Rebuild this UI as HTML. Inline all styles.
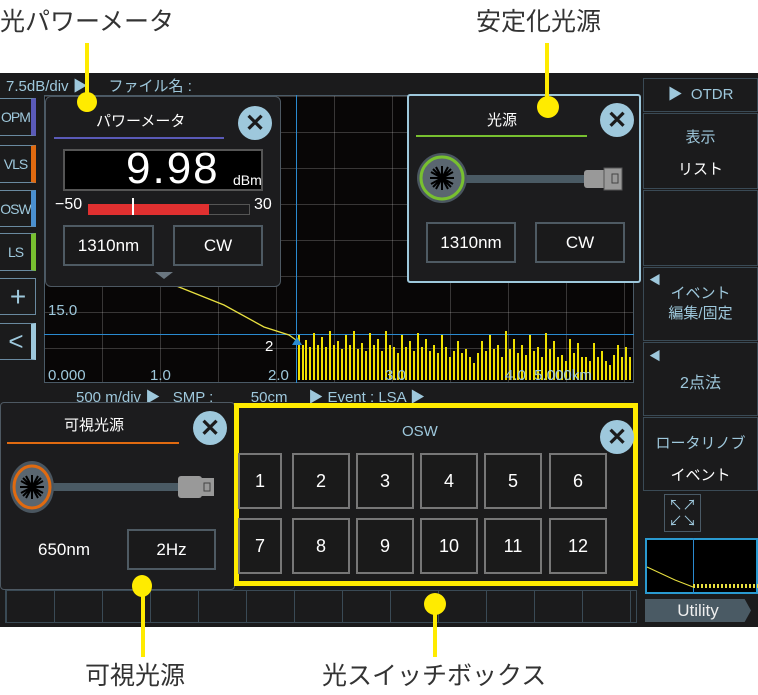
<!DOCTYPE html>
<html><head><meta charset="utf-8"><style>
*{margin:0;padding:0;box-sizing:border-box}
body{width:758px;height:695px;background:#fff;position:relative;overflow:hidden;font-family:"Liberation Sans","Noto Sans CJK JP",sans-serif}
.a{position:absolute}
.lbl{font-size:25px;color:#333;white-space:nowrap}
.scr{left:0;top:73px;width:758px;height:554px;background:#1b1b1c}
.lb{color:#9ec8dc;font-size:15px;white-space:nowrap}
.panel{background:#1c1c1e;border:1px solid #4d5862;border-radius:6px}
.box{border:2px solid #4e5a63;color:#fff;font-size:17px;display:flex;align-items:center;justify-content:center;background:#1a1a1b}
.x{width:34px;height:34px;border-radius:50%;background:#9ec8dc;color:#1b1b1c;font-size:24px;font-weight:bold;display:flex;align-items:center;justify-content:center}
.lbtn{left:0;width:36px;border:1px solid #6a8aa0;border-left:none;color:#9ec8dc;font-size:14px;letter-spacing:-1px;display:flex;align-items:center;justify-content:center;overflow:hidden}
.rb{left:643px;width:115px;border:1px solid #3a4a55;background:#1b1b1c;color:#9ec8dc;font-size:15px;text-align:center}
.g{width:58px;height:56px;border:2px solid #777;color:#fff;font-size:18px;display:flex;align-items:center;justify-content:center;background:#1a1a1a}
.yl{background:#ffeb00}
</style></head><body>
<div class="a lbl" style="left:0;top:2px">光パワーメータ</div>
<div class="a lbl" style="left:476px;top:2px">安定化光源</div>
<div class="a lbl" style="left:85px;top:656px">可視光源</div>
<div class="a lbl" style="left:322px;top:656px">光スイッチボックス</div>

<div class="a scr"></div>
<div class="a lb" style="left:6px;top:75px">7.5dB/div ▶ &nbsp; &nbsp; ファイル名 :</div>
<!-- plot -->
<div class="a" style="left:44px;top:95px;width:590px;height:288px;background:#080606;border:1px solid #4a5a66;
background-image:linear-gradient(90deg,transparent 0,transparent 98%,rgba(200,200,200,.25) 98%),linear-gradient(0deg,transparent 0,transparent 97%,rgba(200,200,200,.25) 97%);background-size:58px 100%,100% 36px"></div>
<div class="a" style="left:296px;top:95px;width:1px;height:288px;background:#2a8ad0"></div>
<div class="a" style="left:44px;top:334px;width:590px;height:1px;background:#2a8ad0"></div>
<svg class="a" style="left:44px;top:95px" width="590" height="288"><polyline points="130,190 180,210 220,232 245,240 252,245" stroke="#e8e040" fill="none" stroke-width="1.3"/>
<g stroke="#f0e000" stroke-width="2">
<path d="M255 240V285M259 250V285M262 245V285M266 252V285M270 238V285M274 250V285M278 242V285M282 252V285M286 236V285M290 250V285M294 246V285M298 254V285M302 240V285M306 250V285M310 236V285M314 254V285M318 248V285M322 256V285M326 238V285M330 250V285M334 244V285M338 256V285M342 236V285M346 250V285M350 252V285M354 258V285M358 240V285M362 252V285M366 246V285M370 256V285M374 238V285M378 252V285M382 244V285M386 256V285M390 250V285M394 258V285M398 240V285M402 252V285M406 262V285M410 256V285M414 246V285M418 258V285M422 254V285M426 262V285M430 268V285M434 258V285M438 246V285M442 256V285M446 240V285M450 254V285M454 250V285M458 262V285M462 236V285M466 254V285M470 244V285M474 258V285M478 250V285M482 260V285M486 240V285M490 256V285M494 252V285M498 262V285M502 238V285M506 254V285M510 246V285M514 262V285M518 260V285M522 266V285M526 244V285M530 258V285M534 248V285M538 262V285M542 262V285M546 266V285M550 248V285M554 262V285M558 256V285M562 266V285M566 270V285M570 260V285M574 250V285M578 262V285M582 252V285M586 262V285"/></g></svg>
<div class="a lb" style="left:48px;top:302px">15.0</div>
<div class="a lb" style="left:48px;top:367px">0.000</div>
<div class="a lb" style="left:150px;top:367px">1.0</div>
<div class="a lb" style="left:268px;top:367px">2.0</div>
<div class="a lb" style="left:385px;top:367px">3.0</div>
<div class="a lb" style="left:505px;top:367px">4.0 &nbsp;5.000km</div>
<div class="a" style="left:265px;top:338px;color:#fff;font-size:15px">2</div>
<div class="a" style="left:292px;top:337px;width:0;height:0;border-left:5px solid transparent;border-right:5px solid transparent;border-bottom:8px solid #2a8ad0"></div>
<div class="a lb" style="left:76px;top:386px">500 m/div ▶ &nbsp; SMP : &nbsp; &nbsp; &nbsp; &nbsp; 50cm &nbsp; &nbsp; ▶ Event : LSA ▶</div>

<!-- left buttons -->
<div class="a lbtn" style="top:98px;height:38px;border-right:5px solid #5a5ab8">OPM</div>
<div class="a lbtn" style="top:145px;height:38px;border-right:5px solid #e06a10">VLS</div>
<div class="a lbtn" style="top:190px;height:37px;border-right:5px solid #4a90d0">OSW</div>
<div class="a lbtn" style="top:233px;height:38px;border-right:5px solid #78c030">LS</div>
<div class="a lbtn" style="top:278px;height:37px;border-right:1px solid #6a8aa0;font-size:28px">+</div>
<div class="a lbtn" style="top:323px;height:37px;border-right:5px solid #9ec8dc;font-size:26px">&lt;</div>

<!-- power meter -->
<div class="a panel" style="left:45px;top:96px;width:236px;height:191px"></div>
<div class="a" style="left:96px;top:110px;color:#fff;font-size:15px">パワーメータ</div>
<div class="a" style="left:54px;top:137px;width:170px;height:2px;background:#5a5ab8"></div>
<div class="a x" style="left:238px;top:106px">✕</div>
<div class="a" style="left:63px;top:149px;width:200px;height:42px;background:#000;border:2px solid #555"></div>
<div class="a" style="left:126px;top:144px;color:#fff;font-size:44px;letter-spacing:2px">9.98</div>
<div class="a" style="left:233px;top:172px;color:#fff;font-size:14px">dBm</div>
<div class="a" style="left:55px;top:196px;color:#fff;font-size:16px">−50</div>
<div class="a" style="left:254px;top:196px;color:#fff;font-size:16px">30</div>
<div class="a" style="left:88px;top:204px;width:162px;height:11px;border:1px solid #555"></div>
<div class="a" style="left:88px;top:204px;width:121px;height:11px;background:#e03030"></div>
<div class="a" style="left:132px;top:198px;width:2px;height:17px;background:#fff"></div>
<div class="a box" style="left:63px;top:225px;width:91px;height:41px">1310nm</div>
<div class="a box" style="left:173px;top:225px;width:90px;height:41px">CW</div>
<div class="a" style="left:155px;top:272px;width:0;height:0;border-left:9px solid transparent;border-right:9px solid transparent;border-top:7px solid #6a7680"></div>

<!-- light source -->
<div class="a panel" style="left:407px;top:94px;width:234px;height:189px;border:2px solid #9ec8dc;border-radius:3px"></div>
<div class="a" style="left:487px;top:109px;color:#fff;font-size:15px">光源</div>
<div class="a" style="left:416px;top:135px;width:171px;height:2px;background:#78c030"></div>
<div class="a x" style="left:600px;top:103px">✕</div>
<svg class="a" style="left:416px;top:150px" width="215" height="60"><rect x="50" y="25" width="120" height="8" fill="#4a5a64"/><circle cx="26" cy="28" r="25" fill="#4a5660"/><circle cx="26" cy="28" r="21" fill="#5a6670" stroke="#78c030" stroke-width="3"/><g stroke="#000" stroke-width="2"><path d="M14 28H38M26 16V40M17 19L35 37M35 19L17 37M20 17L32 39M32 17L20 39M15 22L37 34M37 22L15 34"/></g><rect x="168" y="20" width="24" height="18" rx="3" fill="#999"/><rect x="188" y="18" width="18" height="22" fill="#999" stroke="#555"/><rect x="196" y="24" width="6" height="9" fill="none" stroke="#444"/></svg>
<div class="a box" style="left:426px;top:222px;width:90px;height:41px">1310nm</div>
<div class="a box" style="left:535px;top:222px;width:90px;height:41px">CW</div>

<!-- right column -->
<div class="a rb" style="top:78px;height:34px;line-height:32px;background:#1b1b1c">▶ &nbsp;OTDR</div>
<div class="a rb" style="top:113px;height:76px;padding-top:8px;line-height:32px">表示<br><span style="color:#fff">リスト</span></div>
<div class="a rb" style="top:190px;height:76px"></div>
<div class="a rb" style="top:267px;height:74px;padding-top:16px;line-height:20px;font-size:15px"><span class="a" style="left:5px;top:2px;font-size:12px">◀</span>イベント<br>編集/固定</div>
<div class="a rb" style="top:342px;height:74px;padding-top:26px;font-size:16px"><span class="a" style="left:5px;top:4px;font-size:12px">◀</span>2点法</div>
<div class="a rb" style="top:417px;height:74px;padding-top:10px;line-height:32px">ロータリノブ<br><span style="color:#fff">イベント</span></div>
<div class="a" style="left:664px;top:494px;width:37px;height:38px;border:1px solid #4a5a66;color:#9ec8dc;font-size:14px;line-height:16px;text-align:center;padding-top:2px">↖↗<br>↙↘</div>
<div class="a" style="left:645px;top:538px;width:113px;height:56px;background:#000;border:2px solid #2a9ad0"></div>
<div class="a" style="left:693px;top:538px;width:1px;height:56px;background:#2a8ad0"></div>
<svg class="a" style="left:645px;top:538px" width="113" height="56"><polyline points="2,29 30,42 48,49" stroke="#e8e040" fill="none"/><path d="M48 48H113" stroke="#e8e040" stroke-dasharray="2 2" stroke-width="4"/></svg>
<div class="a" style="left:645px;top:599px;width:106px;height:23px;background:#4a5a64;color:#eee;font-size:17px;text-align:center;line-height:23px;clip-path:polygon(0 0,94% 0,100% 50%,94% 100%,0 100%)">Utility</div>

<!-- bottom grid -->
<div class="a" style="left:5px;top:590px;width:632px;height:33px;border:1px solid #3a4a55;background-image:linear-gradient(90deg,#3a4a55 1px,transparent 1px);background-size:48px 100%"></div>

<!-- VLS -->
<div class="a panel" style="left:0;top:402px;width:235px;height:188px;border-radius:4px"></div>
<div class="a" style="left:64px;top:414px;color:#fff;font-size:15px">可視光源</div>
<div class="a" style="left:7px;top:442px;width:172px;height:2px;background:#e06a10"></div>
<div class="a x" style="left:193px;top:411px">✕</div>
<svg class="a" style="left:6px;top:458px" width="215" height="60"><rect x="36" y="25" width="140" height="8" fill="#4a5a64"/><ellipse cx="26" cy="29" rx="22" ry="26" fill="#4a5660"/><ellipse cx="26" cy="29" rx="18" ry="21" fill="#5a6670" stroke="#e06a10" stroke-width="3"/><g stroke="#000" stroke-width="2"><path d="M14 29H38M26 17V41M17 20L35 38M35 20L17 38M20 18L32 40M32 18L20 40M15 23L37 35M37 23L15 35"/></g><rect x="172" y="18" width="24" height="22" rx="3" fill="#999"/><rect x="192" y="20" width="16" height="18" fill="#999"/><rect x="198" y="25" width="6" height="8" fill="none" stroke="#444"/></svg>
<div class="a" style="left:38px;top:540px;color:#fff;font-size:17px">650nm</div>
<div class="a box" style="left:127px;top:529px;width:89px;height:41px">2Hz</div>

<!-- OSW -->
<div class="a" style="left:234px;top:403px;width:404px;height:183px;border:5px solid #ffeb00;background:#1b1b1c"></div>
<div class="a" style="left:402px;top:423px;color:#9ec8dc;font-size:15px">OSW</div>
<div class="a x" style="left:600px;top:420px">✕</div>
<div class="a g" style="left:238px;top:453px;width:44px">1</div>
<div class="a g" style="left:292px;top:453px">2</div>
<div class="a g" style="left:356px;top:453px">3</div>
<div class="a g" style="left:420px;top:453px">4</div>
<div class="a g" style="left:484px;top:453px">5</div>
<div class="a g" style="left:549px;top:453px">6</div>
<div class="a g" style="left:238px;top:518px;width:44px">7</div>
<div class="a g" style="left:292px;top:518px">8</div>
<div class="a g" style="left:356px;top:518px">9</div>
<div class="a g" style="left:420px;top:518px">10</div>
<div class="a g" style="left:484px;top:518px">11</div>
<div class="a g" style="left:549px;top:518px">12</div>

<!-- callout lines -->
<div class="a yl" style="left:85px;top:43px;width:4px;height:62px"></div>
<div class="a yl" style="left:77px;top:92px;width:20px;height:20px;border-radius:50%"></div>
<div class="a yl" style="left:545px;top:43px;width:4px;height:62px"></div>
<div class="a yl" style="left:537px;top:96px;width:22px;height:22px;border-radius:50%"></div>
<div class="a yl" style="left:141px;top:585px;width:4px;height:72px"></div>
<div class="a yl" style="left:132px;top:575px;width:20px;height:22px;border-radius:50%"></div>
<div class="a yl" style="left:433px;top:602px;width:4px;height:55px"></div>
<div class="a yl" style="left:424px;top:593px;width:22px;height:22px;border-radius:50%"></div>
</body></html>
